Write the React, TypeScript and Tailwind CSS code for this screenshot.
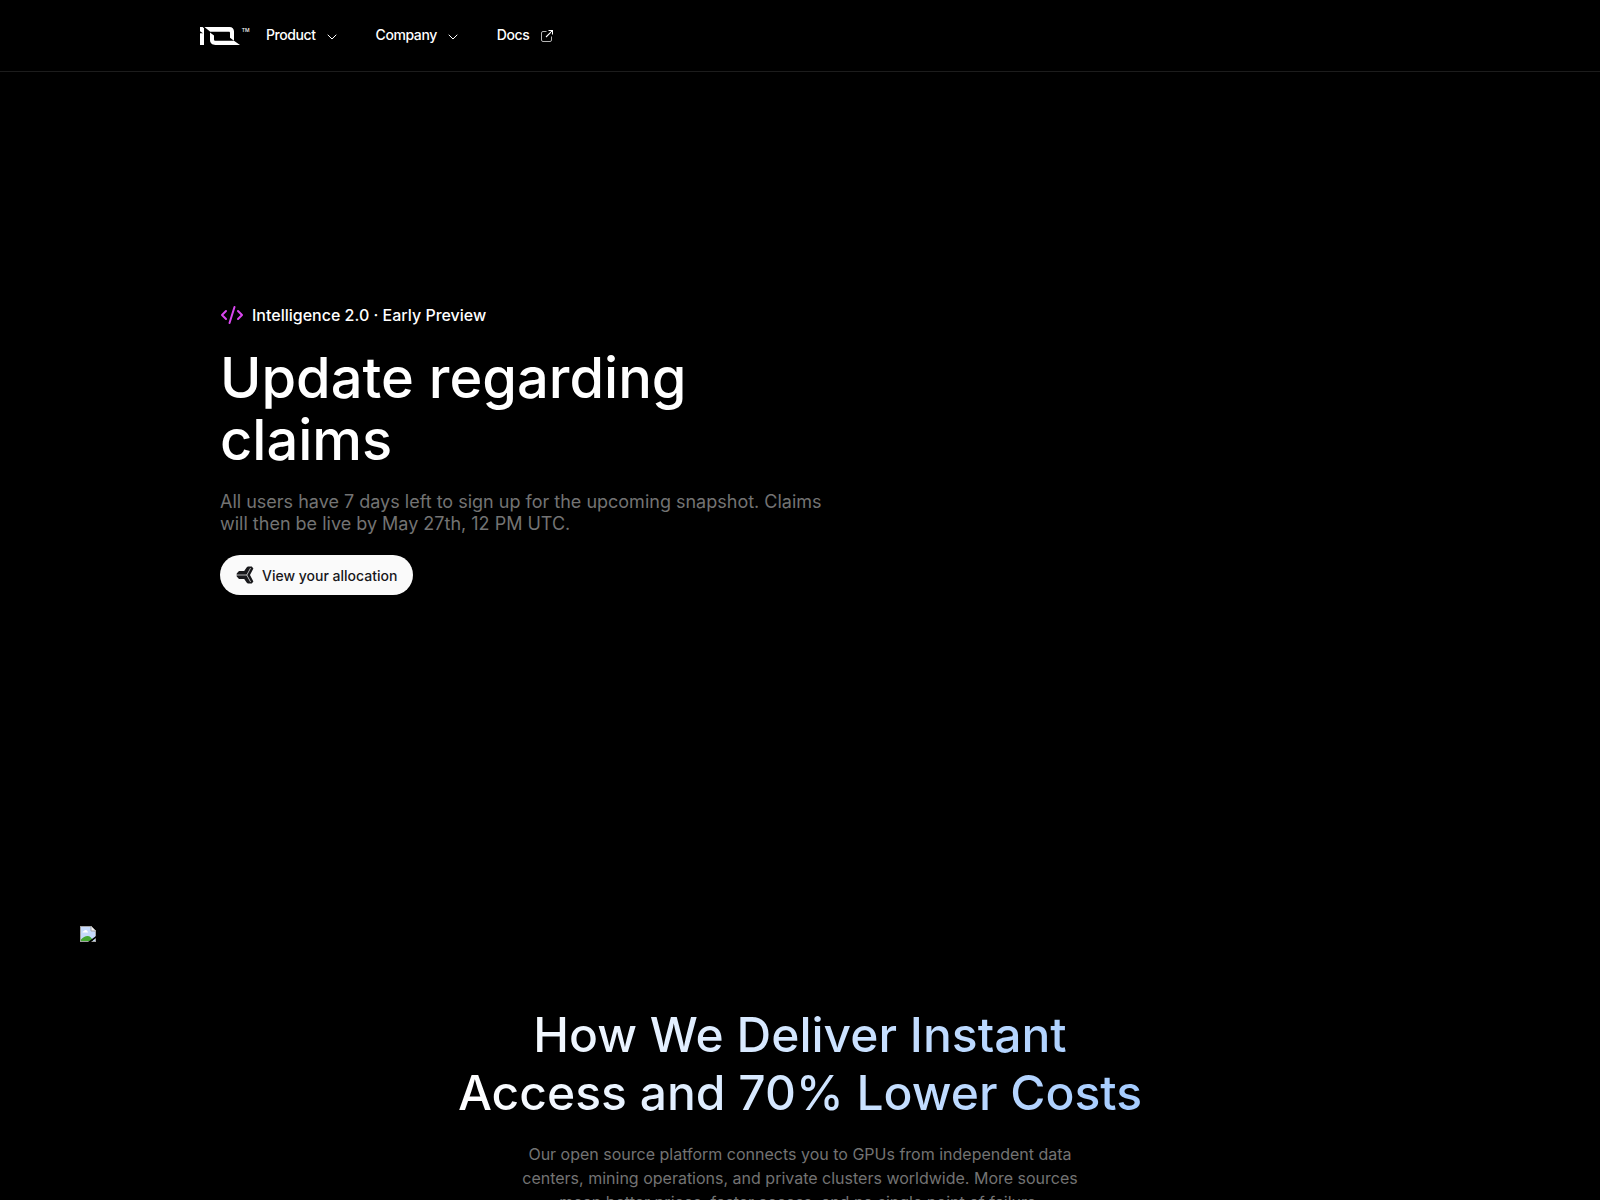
import { ChevronDown } from "lucide-react";

const navItems = [
    { label: "Product", hasMenu: true },
    { label: "Company", hasMenu: true },
];

function Logo() {
    return (
        <svg width="50" height="18" viewBox="0 0 50 18" fill="white">
            <path d="M0 0H2.6L4 1.2V6.5H3.4L0 4.2ZM0 6.2H4V18H0Z" />
            <path d="M4.4 0H29.5C32.3 0 34 1.8 34 4.5V13.8L30 10.8V6C30 5.2 29.6 4.8 28.8 4.8H10.3Z" />
            <path d="M10 5.5L14 8.5V12.2C14 13.2 14.5 13.8 15.5 13.8H34L40 18H15.5C12 18 10 16 10 12.8Z" />
            <text x="41.7" y="5.2" fontSize="5" fontWeight="500" fontFamily="Inter, sans-serif">TM</text>
        </svg>
    );
}

function ExternalIcon() {
    return (
        <svg width="12" height="12" viewBox="0 0 12 12" fill="none" stroke="white">
            <path d="M5.5 1.5H2Q.5 1.5 .5 3V10Q.5 11.5 2 11.5H9Q10.5 11.5 10.5 10V6.5" stroke="#b5b5b5" strokeWidth="1" />
            <path d="M7.5 .5H11.5V4.5M11.2 .8L5 7" strokeWidth="1.1" />
        </svg>
    );
}

function CodeIcon() {
    return (
        <svg width="24" height="24" viewBox="0 0 24 24" fill="none" stroke="#d946ef" strokeWidth="2" strokeLinecap="round" strokeLinejoin="round">
            <path d="M18 16L22 12L18 8" />
            <path d="M6 8L2 12L6 16" />
            <path d="M14.5 4L9.5 20" />
        </svg>
    );
}

function AllocationIcon() {
    return (
        <svg width="18" height="18" viewBox="0 0 18 18">
            <path
                d="M3 5H8.2L10.8 1.2Q11.3 .4 12.2 .4H15.8L17.4 2.6L14 9L17.4 15.4L15.8 17.6H12.2Q11.3 17.6 10.8 16.8L8.2 13H3L.7 10.6V7.4Z"
                fill="#18181b"
            />
            <path d="M.7 9H10.8L14.6 2M10.8 9L14.6 16" fill="none" stroke="#fafafa" strokeWidth=".7" />
        </svg>
    );
}

function BrokenImage() {
    return (
        <svg width="16" height="16" viewBox="0 0 16 16">
            <path d="M0 0H11L16 5V16H0Z" fill="#a3a3a3" />
            <path d="M1 1H10.5L15 5.5V15H1Z" fill="#c6dafc" />
            <path d="M2.5 6.5Q2.5 5 4 5Q4.5 3.5 6 4Q7.5 4.2 7.2 5.2Q8.3 5.4 8 6.5Z" fill="white" />
            <path d="M1 15V13.5Q4 10 7.5 10Q11 10 13 15Z" fill="#45a832" />
            <path d="M11 0V5H16" fill="#f4f4f4" stroke="#a3a3a3" />
            <path d="M16 10V12L11 16H8Z" fill="black" />
        </svg>
    );
}

function Header() {
    return (
        <header className="h-18 border-b border-[#1c1c1c]">
            <div className="mx-auto flex h-full max-w-[1200px] items-center">
                <Logo />
                <nav className="mb-0.5 ml-4 flex items-center text-sm font-medium tracking-[-0.03em]">
                    {navItems.map((item) => (
                        <a key={item.label} className="mr-9 flex items-center gap-2">
                            {item.label}
                            {item.hasMenu && <ChevronDown size={16} strokeWidth={1.5} className="mt-1" />}
                        </a>
                    ))}
                    <a className="flex items-center gap-3">
                        Docs
                        <span className="pt-0.5">
                            <ExternalIcon />
                        </span>
                    </a>
                </nav>
            </div>
        </header>
    );
}

function Hero() {
    return (
        <section className="mx-auto flex h-[854px] w-full max-w-[1200px] flex-col items-start px-5 pt-[231px]">
            <div className="flex h-6 items-center gap-2 text-base font-medium">
                <CodeIcon />
                Intelligence 2.0 · Early Preview
            </div>
            <h1 className="mt-[21px] w-[620px] text-[56px] leading-[1.1] font-medium">
                Update regarding
                <br />
                claims
            </h1>
            <p className="mt-5 w-[620px] text-lg leading-[22px] text-[#737373]">
                All users have 7 days left to sign up for the upcoming snapshot. Claims
                <br />
                will then be live by May 27th, 12 PM UTC.
            </p>
            <button className="mt-5 flex h-10 items-center gap-2 rounded-full bg-[#fafafa] px-4 text-sm font-medium text-[#18181b]">
                <AllocationIcon />
                <span className="pt-px">View your allocation</span>
            </button>
        </section>
    );
}

export default function App() {
    return (
        <div className="h-[1200px] overflow-hidden bg-black font-['Inter',sans-serif] text-white">
            <Header />
            <Hero />
            <section className="px-20">
                <BrokenImage />
                <div className="mt-16 flex flex-col items-center text-center">
                    <h2 className="-translate-y-[0.5px] bg-linear-to-r from-white to-[#a4cbff] bg-clip-text text-5xl leading-[1.2] font-medium text-transparent">
                        How We Deliver Instant
                        <br />
                        Access and 70% Lower Costs
                    </h2>
                    <p className="mt-[21px] w-[600px] text-base leading-6 text-[#737373]">
                        Our open source platform connects you to GPUs from independent data
                        <br />
                        centers, mining operations, and private clusters worldwide. More sources
                        <br />
                        mean better prices, faster access, and no single point of failure.
                    </p>
                </div>
            </section>
        </div>
    );
}
